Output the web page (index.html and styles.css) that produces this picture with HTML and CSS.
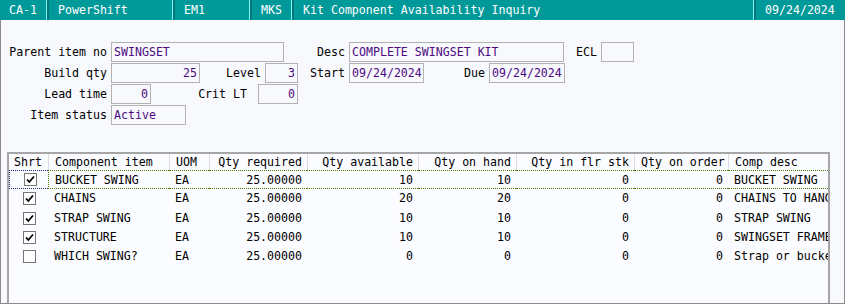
FILE: index.html
```html
<!DOCTYPE html>
<html lang="en">
<head>
    <meta charset="UTF-8">
    <title>Kit Component Availability Inquiry</title>
    <link rel="stylesheet" href="styles.css">
</head>
<body>
    <!-- Title bar -->
    <div class="title-bar">
        <div class="tb-cell tb-code">CA-1</div>
        <div class="tb-cell tb-app">PowerShift</div>
        <div class="tb-cell tb-co">EM1</div>
        <div class="tb-cell tb-user">MKS</div>
        <div class="tb-cell tb-title">Kit Component Availability Inquiry</div>
        <div class="tb-cell tb-date">09/24/2024</div>
    </div>

    <div class="frame">
        <!-- Header fields -->
        <div class="form">
            <div class="form-row">
                <span class="lbl w110">Parent item no</span>
                <span class="fld w173">SWINGSET</span>
                <span class="lbl w65">Desc</span>
                <span class="fld w215">COMPLETE SWINGSET KIT</span>
                <span class="lbl w37">ECL</span>
                <span class="fld w33"></span>
            </div>
            <div class="form-row">
                <span class="lbl w110">Build qty</span>
                <span class="fld num w89">25</span>
                <span class="lbl w65">Level</span>
                <span class="fld num w33">3</span>
                <span class="lbl w51">Start</span>
                <span class="fld w75">09/24/2024</span>
                <span class="lbl w65">Due</span>
                <span class="fld w76">09/24/2024</span>
            </div>
            <div class="form-row">
                <span class="lbl w110">Lead time</span>
                <span class="fld num w40">0</span>
                <span class="lbl lbl-wide w107">Crit LT</span>
                <span class="fld num w40">0</span>
            </div>
            <div class="form-row">
                <span class="lbl w110">Item status</span>
                <span class="fld w75">Active</span>
            </div>
        </div>

        <!-- Component grid -->
        <div class="grid">
            <div class="g-row g-head">
                <div class="c">Shrt</div>
                <div class="c">Component item</div>
                <div class="c">UOM</div>
                <div class="c r">Qty required</div>
                <div class="c r">Qty available</div>
                <div class="c r">Qty on hand</div>
                <div class="c r">Qty in flr stk</div>
                <div class="c r">Qty on order</div>
                <div class="c">Comp desc</div>
            </div>
            <div class="g-row focused">
                <div class="c chk-cell"><span class="chk"><svg width="11" height="11" viewBox="0 0 11 11"><path d="M2 5.5 L4.3 8 L9 2.5" fill="none" stroke="#000" stroke-width="1.8"/></svg></span></div>
                <div class="c">BUCKET SWING</div>
                <div class="c">EA</div>
                <div class="c r">25.00000</div>
                <div class="c r">10</div>
                <div class="c r">10</div>
                <div class="c r">0</div>
                <div class="c r">0</div>
                <div class="c">BUCKET SWING</div>
            </div>
            <div class="g-row">
                <div class="c chk-cell"><span class="chk"><svg width="11" height="11" viewBox="0 0 11 11"><path d="M2 5.5 L4.3 8 L9 2.5" fill="none" stroke="#000" stroke-width="1.8"/></svg></span></div>
                <div class="c">CHAINS</div>
                <div class="c">EA</div>
                <div class="c r">25.00000</div>
                <div class="c r">20</div>
                <div class="c r">20</div>
                <div class="c r">0</div>
                <div class="c r">0</div>
                <div class="c">CHAINS TO HANG SWINGS</div>
            </div>
            <div class="g-row">
                <div class="c chk-cell"><span class="chk"><svg width="11" height="11" viewBox="0 0 11 11"><path d="M2 5.5 L4.3 8 L9 2.5" fill="none" stroke="#000" stroke-width="1.8"/></svg></span></div>
                <div class="c">STRAP SWING</div>
                <div class="c">EA</div>
                <div class="c r">25.00000</div>
                <div class="c r">10</div>
                <div class="c r">10</div>
                <div class="c r">0</div>
                <div class="c r">0</div>
                <div class="c">STRAP SWING</div>
            </div>
            <div class="g-row">
                <div class="c chk-cell"><span class="chk"><svg width="11" height="11" viewBox="0 0 11 11"><path d="M2 5.5 L4.3 8 L9 2.5" fill="none" stroke="#000" stroke-width="1.8"/></svg></span></div>
                <div class="c">STRUCTURE</div>
                <div class="c">EA</div>
                <div class="c r">25.00000</div>
                <div class="c r">10</div>
                <div class="c r">10</div>
                <div class="c r">0</div>
                <div class="c r">0</div>
                <div class="c">SWINGSET FRAME</div>
            </div>
            <div class="g-row">
                <div class="c chk-cell"><span class="chk"></span></div>
                <div class="c">WHICH SWING?</div>
                <div class="c">EA</div>
                <div class="c r">25.00000</div>
                <div class="c r">0</div>
                <div class="c r">0</div>
                <div class="c r">0</div>
                <div class="c r">0</div>
                <div class="c">Strap or bucket</div>
            </div>
        </div>
    </div>
</body>
</html>
```

FILE: styles.css
```css
body {
    margin: 0;
    padding: 0;
    width: 845px;
    height: 304px;
    overflow: hidden;
    font-family: "DejaVu Sans Mono", monospace;
    font-size: 11.6px;
    color: #000;
    background-color: #f7f9fd;
}

/* Title bar */
.title-bar {
    display: flex;
    height: 20px;
    width: 845px;
    background: #009999;
    color: #fff;
    line-height: 20px;
    white-space: nowrap;
}

.tb-cell {
    box-sizing: border-box;
    padding-left: 9px;
}

.tb-cell + .tb-cell {
    border-left: 1px solid #7ff4f4;
    box-shadow: inset 2px 0 #067575;
}

.tb-code { width: 46px; }
.tb-app { width: 126px; padding-left: 11px; }
.tb-co { width: 77px; padding-left: 11px; }
.tb-user { width: 42px; padding-left: 11px; }
.tb-title { width: 462px; padding-left: 11px; }
.tb-date { flex: 1; padding-left: 11px; }

/* Main frame */
.frame {
    box-sizing: border-box;
    height: 284px;
    width: 845px;
    border: 1px solid #8a8a8a;
    border-top: none;
    display: flex;
    flex-direction: column;
}

.form {
    margin-top: 22px;
}

.form-row {
    display: flex;
    height: 21px;
    align-items: flex-start;
}

.lbl {
    box-sizing: border-box;
    text-align: right;
    padding-right: 4px;
    line-height: 20px;
    white-space: nowrap;
}

.lbl-wide {
    padding-right: 11px;
}

.fld {
    box-sizing: border-box;
    height: 20px;
    line-height: 18px;
    border: 1px solid #b2b2b2;
    padding: 0 2px;
    color: #4e0a82;
    white-space: nowrap;
    overflow: hidden;
}

.fld.num {
    text-align: right;
}

.w33 { width: 33px; }
.w37 { width: 37px; }
.w40 { width: 40px; }
.w51 { width: 51px; }
.w65 { width: 65px; }
.w75 { width: 75px; }
.w76 { width: 76px; }
.w89 { width: 89px; }
.w107 { width: 107px; }
.w110 { width: 110px; }
.w173 { width: 173px; }
.w215 { width: 215px; }

/* Component grid */
.grid {
    flex: 1;
    margin: 26px 0 0 6px;
    width: 823px;
    box-sizing: border-box;
    border: 2px solid #a6a6a6;
    border-bottom: none;
    background: #fbfcff;
    overflow: hidden;
}

.g-row {
    display: grid;
    grid-template-columns: 39px 121px 40px 98px 111px 98px 118px 94px 100px;
    height: 19.3px;
    line-height: 19px;
}

.g-head {
    height: 16px;
    line-height: 16px;
}

.g-head .c + .c {
    border-left: 1px solid #dcdcdc;
}

.c {
    box-sizing: border-box;
    padding: 0 6px;
    white-space: nowrap;
    overflow: hidden;
}

.g-head .c:first-child {
    padding-left: 5px;
}

.c.r {
    text-align: right;
    padding-right: 5px;
}

.chk-cell {
    display: flex;
    align-items: center;
    padding-left: 14px;
}

.chk {
    box-sizing: border-box;
    width: 13px;
    height: 13px;
    border: 1px solid #767676;
    background: #fff;
    display: flex;
    align-items: center;
    justify-content: center;
}

/* Focused row */
.focused .c {
    border-top: 1px dotted #4d7a00;
    border-bottom: 1px dotted #4d7a00;
}

.focused .c:nth-child(2) {
    border-left: 1px dotted #4d7a00;
}

.focused .chk-cell {
    border: 1px dotted #1a2a80;
    border-right: none;
}
```
